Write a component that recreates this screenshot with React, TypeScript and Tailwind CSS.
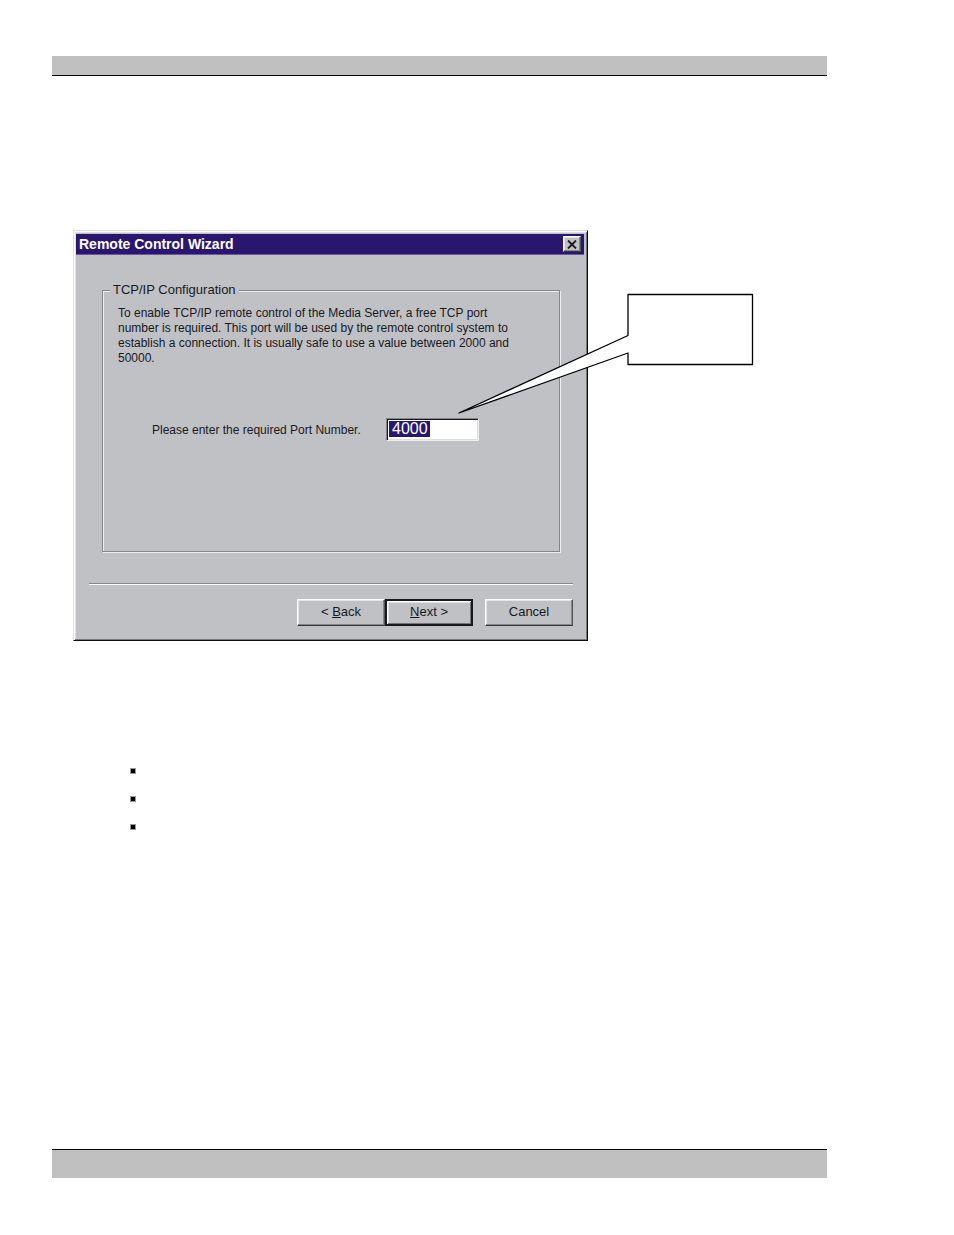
import * as React from "react"
import clsx from "clsx"

const raised =
  "border border-t-white border-l-white border-r-[#55565a] border-b-[#35363a] shadow-[inset_-1px_-1px_0_#85868a,inset_1px_1px_0_#e2e3e5]"

type WizardButtonProps = {
  children: React.ReactNode
  isDefault?: boolean
}

function WizardButton({ children, isDefault }: WizardButtonProps) {
  return (
    <button
      type="button"
      className={clsx(
        "flex h-[27px] w-[88px] items-center justify-center bg-[#c0c1c5] pb-[2px] text-[13px] leading-4 whitespace-pre",
        isDefault
          ? "border-2 border-[#18191d] shadow-[inset_1px_1px_0_#ffffff,inset_-1px_-1px_0_#75767a,inset_2px_2px_0_#e2e3e5]"
          : raised
      )}
    >
      {children}
    </button>
  )
}

function TitleBar() {
  return (
    <div className="flex h-[21px] items-center justify-between border-b border-[#6a5b98] bg-[#29166f] px-[3px]">
      <h1 id="wizard-title" className="text-sm leading-4 font-bold text-white">
        Remote Control Wizard
      </h1>
      <button
        type="button"
        aria-label="Close"
        className={clsx("flex h-4 w-[18px] items-center justify-center bg-[#c0c1c5]", raised)}
      >
        <svg viewBox="0 0 10 9" className="h-[9px] w-[10px]" aria-hidden="true">
          <path d="M1 0.5 L9 8.5 M9 0.5 L1 8.5" stroke="#18191d" strokeWidth="1.8" fill="none" />
        </svg>
      </button>
    </div>
  )
}

// Speech balloon pointing at the port field
function Callout() {
  return (
    <svg
      viewBox="0 0 296 122"
      className="pointer-events-none absolute top-[63px] left-[385px] h-[122px] w-[296px]"
      aria-hidden="true"
    >
      <path
        d="M170 1.5 H294.5 V71.5 H170 V60 L1 120 L170 42.5 Z"
        fill="#ffffff"
        stroke="#000000"
        strokeWidth="1.3"
        strokeLinejoin="round"
      />
    </svg>
  )
}

function RemoteControlWizard() {
  return (
    <section
      aria-labelledby="wizard-title"
      className="border border-t-[#dedfe0] border-r-[#0c0d12] border-b-[#0c0d12] border-l-[#dedfe0] bg-[#c0c1c5] pt-[3px] pr-[3px] pb-[14px] pl-[2px] text-[#18191d] shadow-[inset_1px_1px_0_#ffffff,inset_-1px_-1px_0_#77787c,inset_2px_2px_0_#dedfe0]"
    >
      <TitleBar />
      <form className="pr-[11px] pl-[13px]" onSubmit={(e) => e.preventDefault()}>
        <fieldset className="mt-[27px] mr-[13px] ml-[13px] h-[270px] border border-[#85868a] pl-[7px] shadow-[1px_1px_0_#eeeeef,inset_1px_1px_0_#eeeeef]">
          <legend className="bg-[#c0c1c5] px-[3px] text-[13px] leading-4">TCP/IP Configuration</legend>
          <p className="mt-2 ml-2 text-xs leading-[15px]">
            To enable TCP/IP remote control of the Media Server, a free TCP port
            <br />
            number is required. This port will be used by the remote control system to
            <br />
            establish a connection. It is usually safe to use a value between 2000 and
            <br />
            50000.
          </p>
          <div className="mt-[52px] ml-[42px] flex items-center">
            <label htmlFor="port" className="w-[234px] text-xs leading-4">
              Please enter the required Port Number.
            </label>
            <div className="h-[23px] w-[93px] border border-t-[#85868a] border-r-[#eeeeef] border-b-[#eeeeef] border-l-[#85868a] bg-white pt-[2px] pl-[2px] shadow-[inset_1px_1px_0_#18191d,inset_-1px_-1px_0_#dedfe0]">
              <input
                id="port"
                type="text"
                defaultValue="4000"
                className="block h-4 w-[41px] bg-[#29166f] pl-[3px] text-base leading-4 text-white outline-none"
              />
            </div>
          </div>
        </fieldset>
        <hr className="mt-[31px] h-[2px] border-t border-b border-t-[#85868a] border-b-white" />
        <div className="mt-[14px] flex justify-end">
          <WizardButton>
            &lt; <u>B</u>ack
          </WizardButton>
          <WizardButton isDefault>
            <u>N</u>ext &gt;
          </WizardButton>
          <div className="ml-3">
            <WizardButton>Cancel</WizardButton>
          </div>
        </div>
      </form>
    </section>
  )
}

export default function App() {
  return (
    <div className="bg-white pt-14 pr-[127px] pb-14 pl-[52px] font-['Liberation_Sans',Arial,sans-serif]">
      <header className="h-5 border-b border-black bg-[#c0c0c0]" />
      <main>
        <div className="relative mt-[154px] ml-[21px] w-full max-w-[515px]">
          <RemoteControlWizard />
          <Callout />
        </div>
        <ul className="mt-[127px] ml-[78px] flex flex-col gap-[22px]">
          {[0, 1, 2].map((i) => (
            <li key={i} className="h-1.5 w-1.5 border border-[#999999] bg-black" />
          ))}
        </ul>
      </main>
      <footer className="mt-[319px] h-[29px] border-t border-black bg-[#c0c0c0]" />
    </div>
  )
}
